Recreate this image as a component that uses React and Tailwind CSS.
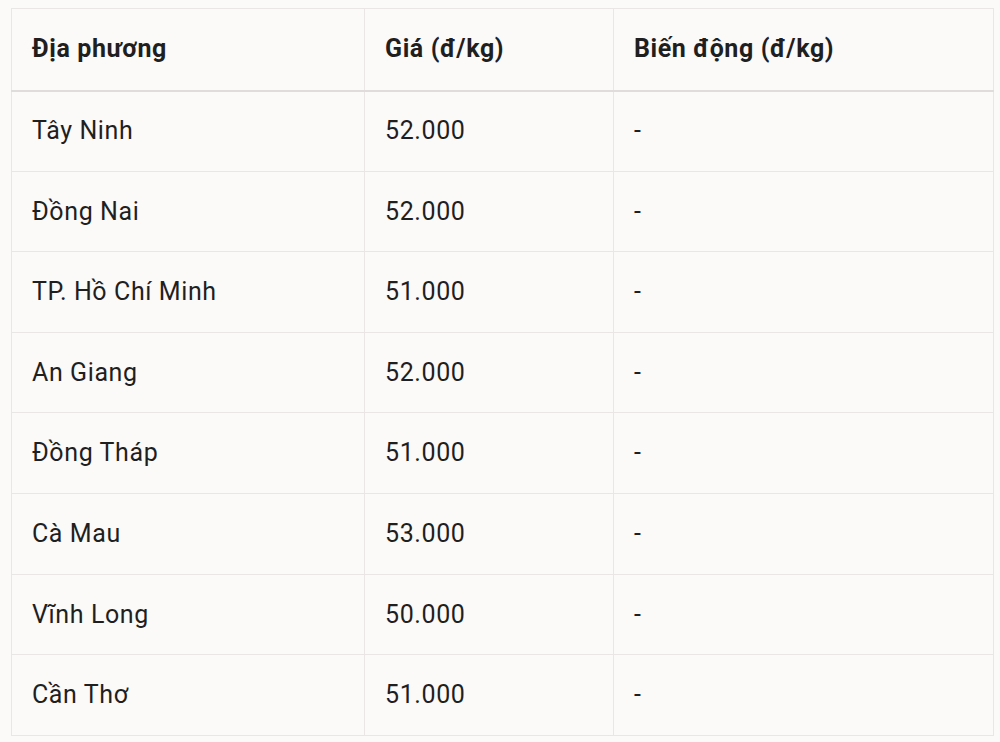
export default function App() {
  const rows = [
    ["Tây Ninh", "52.000"],
    ["Đồng Nai", "52.000"],
    ["TP. Hồ Chí Minh", "51.000"],
    ["An Giang", "52.000"],
    ["Đồng Tháp", "51.000"],
    ["Cà Mau", "53.000"],
    ["Vĩnh Long", "50.000"],
    ["Cần Thơ", "51.000"],
  ];
  return (
    <div className="w-[1000px] h-[742px] bg-[#fcf9f9] pt-[8px] pl-[11px] overflow-hidden" style={{ fontFamily: "Roboto, 'Noto Sans', sans-serif" }}>
      <table className="border-collapse text-[25px] tracking-[0.6px] text-[#1f1f1f] table-fixed w-[982px]">
        <colgroup>
          <col className="w-[353px]" />
          <col className="w-[249px]" />
          <col className="w-[380px]" />
        </colgroup>
        <thead>
          <tr className="h-[82px]">
            <th className="border border-[#ebe6e6] border-b-2 border-b-[#e0dcdc] text-left font-bold pl-[20px] pb-[1px]">Địa phương</th>
            <th className="border border-[#ebe6e6] border-b-2 border-b-[#e0dcdc] text-left font-bold pl-[20px] pb-[1px]">Giá (đ/kg)</th>
            <th className="border border-[#ebe6e6] border-b-2 border-b-[#e0dcdc] text-left font-bold pl-[20px] pb-[1px]">Biến động (đ/kg)</th>
          </tr>
        </thead>
        <tbody>
          {rows.map(([a, b]) => (
            <tr key={a} className="h-[80.6px]">
              <td className="border border-[#ebe6e6] pl-[20px]">{a}</td>
              <td className="border border-[#ebe6e6] pl-[20px]">{b}</td>
              <td className="border border-[#ebe6e6] pl-[20px]">-</td>
            </tr>
          ))}
        </tbody>
      </table>
    </div>
  );
}
